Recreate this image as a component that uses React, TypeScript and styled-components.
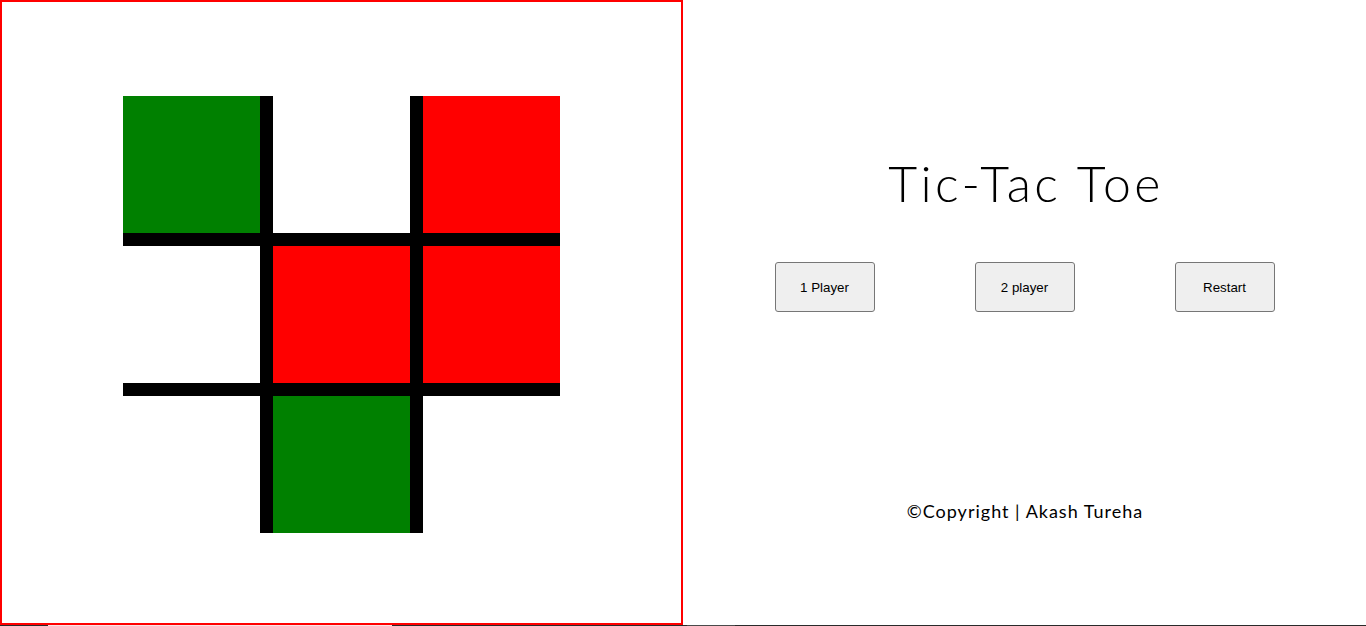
import React from 'react';
import styled, { createGlobalStyle } from 'styled-components';

const GlobalStyle = createGlobalStyle`
	html,
	body {
		margin: 0;
		padding: 0;
		background-color: white;
	}

	body {
		font-family: 'Liberation Sans', Arial, sans-serif;
	}
`;

const Root = styled.div`
	display: flex;
	flex-direction: column;
`;

const Main = styled.main`
	display: flex;
	height: 625px;
`;

const GamePanel = styled.section`
	width: 683px;
	box-sizing: border-box;
	border: 2px solid #ff0000;
	display: flex;
	justify-content: center;
	align-items: flex-start;
	padding-top: 94px;
`;

const Board = styled.div`
	display: grid;
	grid-template-columns: 150px 150px 137px;
	grid-template-rows: 150px 150px 137px;
`;

const Cell = styled.div<{ $fill: string; $right: boolean; $bottom: boolean }>`
	box-sizing: border-box;
	background-color: ${({ $fill }) => $fill};
	border-right: ${({ $right }) => ($right ? '13px solid black' : 'none')};
	border-bottom: ${({ $bottom }) => ($bottom ? '13px solid black' : 'none')};
`;

const MenuPanel = styled.section`
	flex: 1;
	display: flex;
	flex-direction: column;
	align-items: center;
	padding-top: 153px;
`;

const Title = styled.h1`
	margin: 0 0 0 3px;
	font-family: Lato, 'Open Sans', sans-serif;
	font-weight: 300;
	font-size: 50px;
	line-height: 60px;
	letter-spacing: 3.4px;
	color: black;
`;

const ButtonsContainer = styled.div`
	display: flex;
	column-gap: 100px;
	margin-top: 49px;
`;

const MenuButton = styled.button`
	width: 100px;
	height: 50px;
	box-sizing: border-box;
	background-color: #efefef;
	border: 1px solid #767676;
	border-radius: 3px;
	font-family: 'Liberation Sans', Arial, sans-serif;
	font-size: 13.33px;
	color: black;
	padding: 0;
`;

const Copyright = styled.p`
	margin: 188px 0 0 1px;
	font-family: Lato, 'Open Sans', sans-serif;
	font-size: 18px;
	line-height: 22px;
	letter-spacing: 1px;
	color: black;
`;

const PageEdge = styled.div`
	height: 20px;
	background: linear-gradient(
		to right,
		#2a2a2a 0,
		#2a2a2a 48px,
		#fbe4e4 48px,
		#fbe4e4 392px,
		#2a2a2a 392px,
		#2a2a2a 687px,
		#4a4a4a 687px,
		#4a4a4a 735px,
		#2a2a2a 735px
	);
`;

const GREEN = '#008000';
const RED = '#ff0000';

const cells = [GREEN, 'white', RED, 'white', RED, RED, 'white', GREEN, 'white'];

const App = () => {
	return (
		<Root>
			<GlobalStyle />
			<Main>
				<GamePanel>
					<Board>
						{cells.map((fill, i) => (
							<Cell key={i} $fill={fill} $right={i % 3 !== 2} $bottom={i < 6} />
						))}
					</Board>
				</GamePanel>
				<MenuPanel>
					<Title>Tic-Tac Toe</Title>
					<ButtonsContainer>
						<MenuButton>1 Player</MenuButton>
						<MenuButton>2 player</MenuButton>
						<MenuButton>Restart</MenuButton>
					</ButtonsContainer>
					<Copyright>©Copyright | Akash Tureha</Copyright>
				</MenuPanel>
			</Main>
			<PageEdge />
		</Root>
	);
};

export default App;
